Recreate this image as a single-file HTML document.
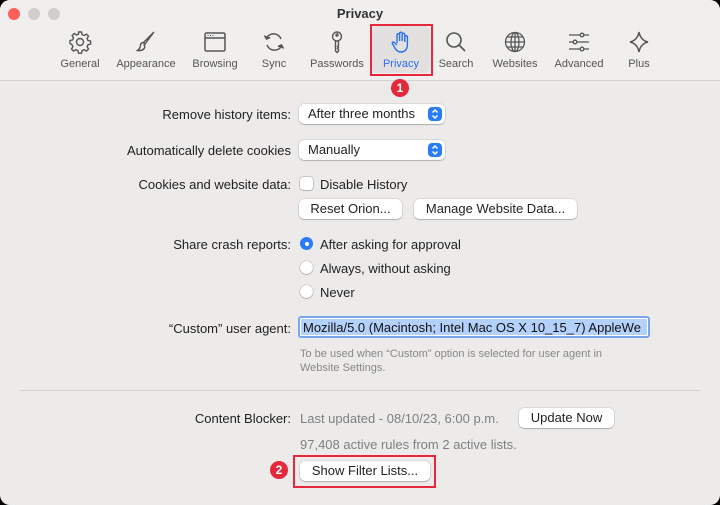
<!DOCTYPE html>
<html><head><meta charset="utf-8"><style>
html,body{margin:0;padding:0;background:#000;}
#w{position:relative;width:720px;height:505px;background:#ecebea;border-radius:10px;overflow:hidden;font-family:"Liberation Sans",sans-serif;font-size:13px;color:#222;}
#tb{position:absolute;left:0;top:0;width:720px;height:80px;background:#f0efee;border-bottom:1px solid #d4d3d2;}
.a{position:absolute;white-space:nowrap;}
.lbl{position:absolute;right:429px;white-space:nowrap;}
.tl{position:absolute;width:12px;height:12px;border-radius:50%;top:8px;}
.it{position:absolute;top:30px;width:70px;margin-left:-35px;text-align:center;font-size:11px;color:#555;}
.it svg{display:block;margin:0 auto 4px;width:24px;height:24px;}
.btn{position:absolute;background:#fff;border-radius:5px;box-shadow:0 0 0 .5px rgba(0,0,0,.15),0 1px 1px rgba(0,0,0,.2);height:20px;line-height:20px;text-align:center;font-size:13px;color:#222;}
.pop{position:absolute;background:#fff;border-radius:5px;box-shadow:0 0 0 .5px rgba(0,0,0,.15),0 1px 1px rgba(0,0,0,.2);height:20px;line-height:20px;padding-left:9px;box-sizing:border-box;}
.chev{position:absolute;right:3px;top:3px;width:14px;height:14px;background:#2a7cf6;border-radius:4px;}
.chev svg{position:absolute;left:0;top:0;width:14px;height:14px;}
.rad{position:absolute;width:13px;height:13px;border-radius:50%;background:#fff;box-shadow:0 0 0 .5px rgba(0,0,0,.25),0 1px 1px rgba(0,0,0,.15);}
.badge{position:absolute;width:18px;height:18px;border-radius:50%;background:#e5283c;color:#fff;font-weight:bold;font-size:12px;line-height:18px;text-align:center;}
.gray{color:#888;}
</style></head><body><div id="w">
<div id="tb">
<div class="tl" style="left:8px;background:#fe5f57;"></div>
<div class="tl" style="left:28px;background:#d0cfce;"></div>
<div class="tl" style="left:48px;background:#d0cfce;"></div>
<div class="a" style="left:0;width:720px;text-align:center;top:6px;font-weight:bold;font-size:13px;color:#333;">Privacy</div>
<div style="position:absolute;left:372px;top:26px;width:58px;height:47px;background:#e2e1e0;border-radius:5px;"></div>
<div class="it" style="left:80px"><svg viewBox="0 0 24 24" fill="none" stroke="#555" stroke-width="1.4"><circle cx="12" cy="12" r="3.5"/><path d="M10.5 2h3l.6 2.6 2 .9 2.3-1.4 2.1 2.1-1.4 2.3.9 2 2.6.6v3l-2.6.6-.9 2 1.4 2.3-2.1 2.1-2.3-1.4-2 .9-.6 2.6h-3l-.6-2.6-2-.9-2.300 1.4-2.1-2.1 1.4-2.3-.9-2L2 13.5v-3l2.6-.6.9-2-1.4-2.3 2.1-2.1 2.3 1.4 2-.9z"/></svg>General</div>
<div class="it" style="left:146px"><svg viewBox="0 0 24 24" fill="none" stroke="#555" stroke-width="1.4"><path d="M20 2 11 14l-1.5-1.5zM9.5 12.5c-2 0-3 1.5-3.2 3.5-.2 2-1.3 3.5-2.8 4.5 3 .5 6-.5 7-2.5.6-1.3.3-2.5-1-3.5"/></svg>Appearance</div>
<div class="it" style="left:215px"><svg viewBox="0 0 24 24" fill="none" stroke="#555" stroke-width="1.5"><rect x="2" y="3" width="20" height="18" rx="1.5"/><path d="M2 8h20"/><path d="M4.5 5.5h1M7 5.5h1M9.5 5.5h1" stroke-width="1"/></svg>Browsing</div>
<div class="it" style="left:274px"><svg viewBox="0 0 24 24" fill="none" stroke="#555" stroke-width="1.5"><path d="M19 9A8 8 0 0 0 4.5 8M5 15a8 8 0 0 0 14.5 1"/><path d="M2.5 5.5 4.5 9l3.5-1.5M21.5 18.5 19.5 15 16 16.5" fill="#555"/></svg>Sync</div>
<div class="it" style="left:337px"><svg viewBox="0 0 24 24" fill="none" stroke="#555" stroke-width="1.4"><circle cx="12" cy="6.5" r="4.5"/><circle cx="12" cy="5" r="1"/><path d="M10.5 10.8V21l1.5 1.5 1.5-1.5v-1.5l-1-1 1-1-1-1 1-1v-4.7"/></svg>Passwords</div>
<div class="it" style="left:401px;color:#2a6ff0"><svg viewBox="0 0 24 24" fill="none" stroke="#2a6ff0" stroke-width="1.4"><path d="M8 13V5a1.3 1.3 0 0 1 2.6 0v6V3.5a1.3 1.3 0 0 1 2.6 0V11V4.5a1.3 1.3 0 0 1 2.6 0V12V7a1.3 1.3 0 0 1 2.6 0v8c0 4-2.5 7-6.5 7-3 0-4.5-1.5-6-4l-2.5-4.5c-.6-1 .8-2 1.6-1.2L8 15"/></svg>Privacy</div>
<div class="it" style="left:456px"><svg viewBox="0 0 24 24" fill="none" stroke="#555" stroke-width="1.6"><circle cx="10" cy="10" r="7"/><path d="M15 15l6 6"/></svg>Search</div>
<div class="it" style="left:515px"><svg viewBox="0 0 24 24" fill="none" stroke="#555" stroke-width="1.3"><circle cx="12" cy="12" r="9.5"/><ellipse cx="12" cy="12" rx="4" ry="9.5"/><path d="M12 2.5v19M2.5 12h19M4 7h16M4 17h16"/></svg>Websites</div>
<div class="it" style="left:579px"><svg viewBox="0 0 24 24" fill="none" stroke="#555" stroke-width="1.3"><path d="M2 5h20M2 12h20M2 19h20"/><circle cx="15" cy="5" r="1.8" fill="#f0efee"/><circle cx="8" cy="12" r="1.8" fill="#f0efee"/><circle cx="15" cy="19" r="1.8" fill="#f0efee"/></svg>Advanced</div>
<div class="it" style="left:639px"><svg viewBox="0 0 24 24" fill="none" stroke="#555" stroke-width="1.5"><path d="M12 2c.8 5 4 9 9 10-5 1-8.2 5-9 10-.8-5-4-9-9-10 5-1 8.2-5 9-10z"/></svg>Plus</div>
<div style="position:absolute;left:370px;top:24px;width:59px;height:48px;border:2px solid #e5283c;"></div>
</div>
<div class="badge" style="left:391px;top:79px;">1</div>

<div class="lbl" style="top:107px">Remove history items:</div>
<div class="pop" style="left:299px;top:104px;width:146px">After three months<div class="chev"><svg viewBox="0 0 14 14" fill="none" stroke="#fff" stroke-width="1.5"><path d="M4.5 5.5 7 3l2.5 2.5M4.5 8.5 7 11l2.5-2.5"/></svg></div></div>
<div class="lbl" style="top:143px">Automatically delete cookies</div>
<div class="pop" style="left:299px;top:140px;width:146px">Manually<div class="chev"><svg viewBox="0 0 14 14" fill="none" stroke="#fff" stroke-width="1.5"><path d="M4.5 5.5 7 3l2.5 2.5M4.5 8.5 7 11l2.5-2.5"/></svg></div></div>
<div class="lbl" style="top:177px">Cookies and website data:</div>
<div style="position:absolute;left:300px;top:177px;width:13px;height:13px;background:#fff;border-radius:3px;box-shadow:0 0 0 .5px rgba(0,0,0,.3),0 1px 1px rgba(0,0,0,.1);"></div>
<div class="a" style="left:320px;top:177px">Disable History</div>
<div class="btn" style="left:299px;top:199px;width:103px">Reset Orion...</div>
<div class="btn" style="left:414px;top:199px;width:163px">Manage Website Data...</div>
<div class="lbl" style="top:237px">Share crash reports:</div>
<div class="rad" style="left:300px;top:237px;background:#2a7cf6;box-shadow:none"><div style="position:absolute;left:4.5px;top:4.5px;width:4px;height:4px;border-radius:50%;background:#fff"></div></div>
<div class="a" style="left:320px;top:237px">After asking for approval</div>
<div class="rad" style="left:300px;top:261px"></div>
<div class="a" style="left:320px;top:261px">Always, without asking</div>
<div class="rad" style="left:300px;top:285px"></div>
<div class="a" style="left:320px;top:285px">Never</div>
<div class="lbl" style="top:321px">“Custom” user agent:</div>
<div style="position:absolute;left:298px;top:316px;width:352px;height:22px;background:#fff;border:2px solid #7aa6ec;border-radius:3px;box-sizing:border-box;overflow:hidden;"><div style="position:absolute;left:1px;top:1px;right:1px;height:16px;background:#b3d1fb;line-height:17px;padding-left:2px;white-space:nowrap;color:#111;">Mozilla/5.0 (Macintosh; Intel Mac OS X 10_15_7) AppleWe</div></div>
<div class="a gray" style="left:300px;top:347px;font-size:11px;line-height:14px;">To be used when “Custom” option is selected for user agent in<br>Website Settings.</div>
<div style="position:absolute;left:20px;top:390px;width:680px;height:1px;background:#d4d3d2"></div>
<div class="lbl" style="top:411px">Content Blocker:</div>
<div class="a gray" style="left:300px;top:411px;color:#808080">Last updated - 08/10/23, 6:00 p.m.</div>
<div class="btn" style="left:519px;top:408px;width:95px">Update Now</div>
<div class="a gray" style="left:300px;top:437px;color:#808080">97,408 active rules from 2 active lists.</div>
<div class="btn" style="left:300px;top:461px;width:130px">Show Filter Lists...</div>
<div style="position:absolute;left:293px;top:455px;width:139px;height:29px;border:2px solid #e5283c;"></div>
<div class="badge" style="left:270px;top:461px;">2</div>
</div></body></html>
